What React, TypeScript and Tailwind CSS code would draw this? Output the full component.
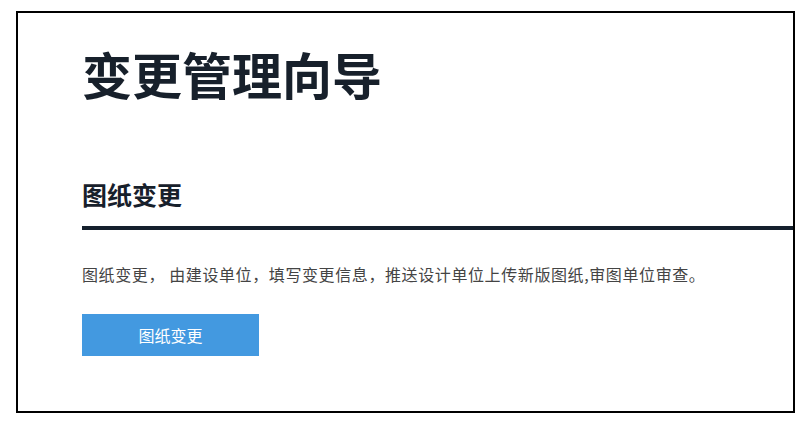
const cjk = { fontFamily: '"Noto Sans CJK SC", "Noto Sans", sans-serif' };

export default function App() {
  return (
    <div className="w-[810px] h-[426px] bg-white pt-[11px] pl-[16px]" style={cjk}>
      <div className="w-[779px] h-[402px] border-2 border-black pl-[64px] pt-[35px]">
        <h1 className="text-[50px] leading-[50px] font-bold text-[#17202b]">变更管理向导</h1>

        <h2 className="mt-[84px] text-[25px] leading-[25px] font-bold text-[#17202b]">图纸变更</h2>
        <div className="mt-[19px] h-[4px] bg-[#15202d]" />

        <p className="mt-[36px] text-[16px] leading-[16px] tracking-[0.6px] text-[#444]">
          图纸变更， 由建设单位，填写变更信息，推送设计单位上传新版图纸,审图单位审查。
        </p>

        <button className="mt-[32px] w-[177px] h-[42px] bg-[#4399e0] text-white text-[16px] flex items-center justify-center">
          图纸变更
        </button>
      </div>
    </div>
  );
}
